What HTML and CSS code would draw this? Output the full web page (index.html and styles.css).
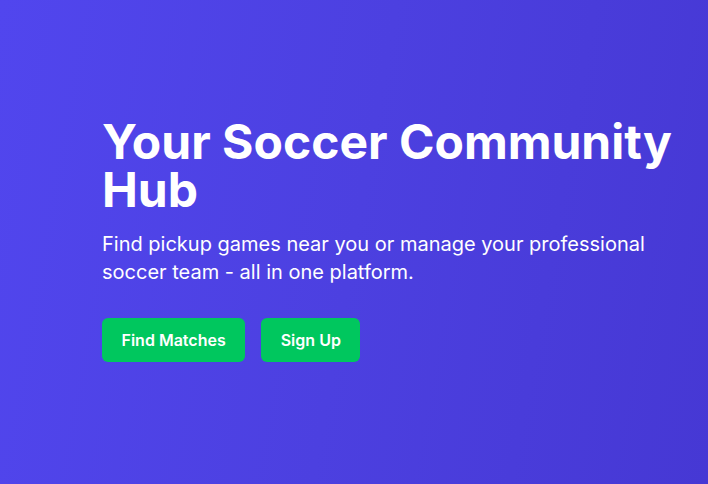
FILE: index.html
```html
<!DOCTYPE html>
<html lang="en">
<head>
<meta charset="utf-8">
<title>Soccer Community Hub</title>
<link rel="stylesheet" href="styles.css">
</head>
<body>
<section class="hero">
  <div class="hero-inner">
    <h1 class="hero-title">Your Soccer Community Hub</h1>
    <p class="hero-text">Find pickup games near you or manage your professional soccer team - all in one platform.</p>
    <div class="hero-actions">
      <a class="btn" href="#">Find Matches</a>
      <a class="btn" href="#">Sign Up</a>
    </div>
  </div>
</section>
</body>
</html>
```

FILE: styles.css
```css
* { box-sizing: border-box; }
html, body { margin: 0; padding: 0; }
body {
  font-family: Inter, "Noto Sans", "Liberation Sans", sans-serif;
  color: #ffffff;
}
.hero {
  min-height: 484px;
  background: linear-gradient(100deg, #5146ee 0%, #4c40e0 50%, #4638d4 100%);
  display: flex;
  align-items: center;
  padding: 0 0 4px 102px;
}
.hero-inner {
  width: 596px;
}
.hero-title {
  margin: 0 0 16px;
  font-size: 48px;
  line-height: 48px;
  font-weight: 700;
}
.hero-text {
  margin: 0 0 32px;
  font-size: 20px;
  line-height: 28px;
  font-weight: 400;
}
.hero-actions {
  display: flex;
  gap: 16px;
}
.btn {
  display: inline-block;
  background: #00c75e;
  color: #ffffff;
  text-decoration: none;
  font-size: 16px;
  line-height: 24px;
  font-weight: 600;
  padding: 10px 19.5px;
  border-radius: 6px;
}
```
